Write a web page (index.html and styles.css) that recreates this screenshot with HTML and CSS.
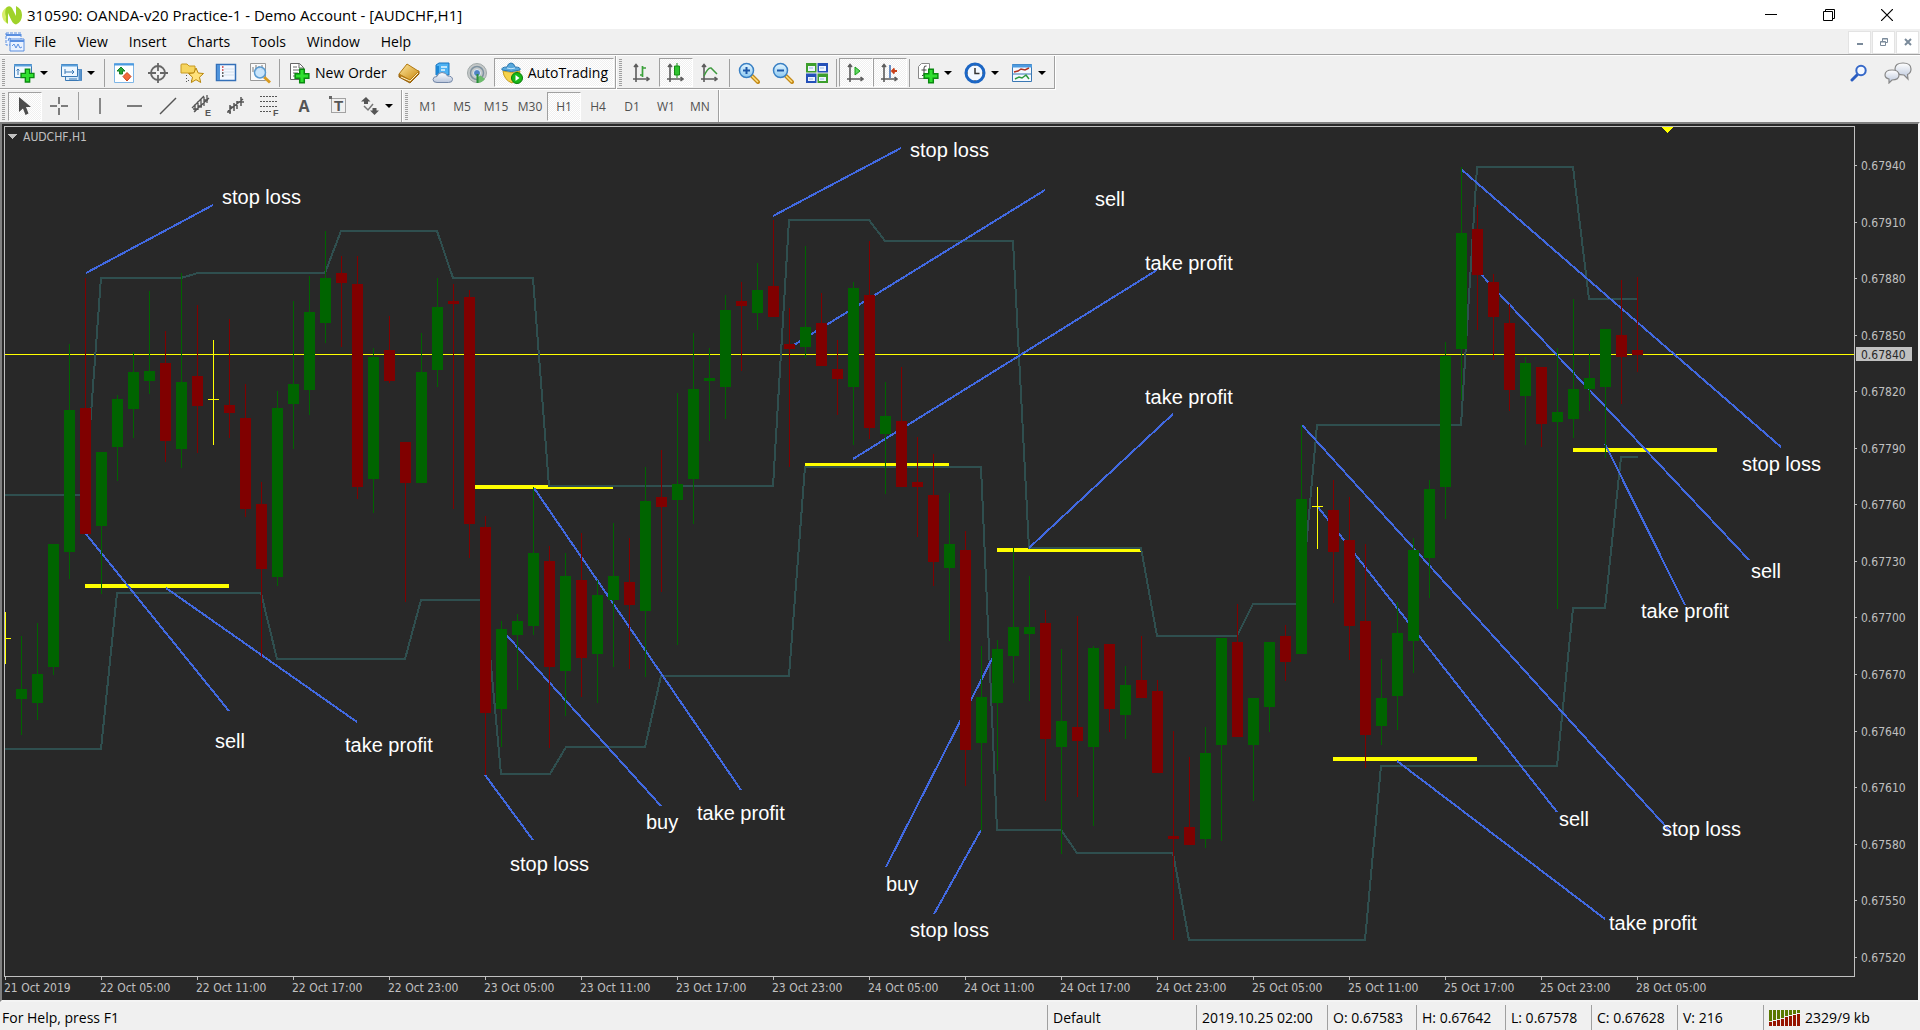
FILE: index.html
```html
<!DOCTYPE html>
<html lang="en">
<head>
<meta charset="utf-8">
<title>310590: OANDA-v20 Practice-1 - Demo Account - [AUDCHF,H1]</title>
<link rel="stylesheet" href="styles.css">
</head>
<body>
<svg class="defs" aria-hidden="true">
  <defs>
    <linearGradient id="gold" x1="0" y1="0" x2="1" y2="1"><stop offset="0" stop-color="#ffe9a0"/><stop offset="1" stop-color="#c8860c"/></linearGradient>
    <linearGradient id="sky" x1="0" y1="0" x2="0" y2="1"><stop offset="0" stop-color="#e4f6ff"/><stop offset="1" stop-color="#8cc8f0"/></linearGradient>
    <linearGradient id="cloud" x1="0" y1="0" x2="0" y2="1"><stop offset="0" stop-color="#fff"/><stop offset="1" stop-color="#b8c4da"/></linearGradient>
    <symbol id="plus" viewBox="0 0 14 14"><path d="M5 1h4v4h4v4H9v4H5V9H1V5h4z" fill="#2fe02f" stroke="#0a8a10" stroke-width="1.3"/></symbol>
    <symbol id="axes" viewBox="0 0 18 20"><path d="M4 19V2M1 16h16M2 4l2-2.5L6 4M14.500 14l2.500 2-2.500 2" fill="none" stroke="#5c5c5c" stroke-width="1.600"/></symbol>
  </defs>
</svg>

<header class="titlebar">
  <svg class="logo" viewBox="0 0 20 20" aria-hidden="true"><path d="M5 2Q0 5 0 10t5 8.500V5z" fill="#d9ee6e"/><path d="M5 2Q8 0 10 3l4 8V1q6 3 6 9 0 7-6 9.500-3-.5-5-5L6 8v11Q3 17 4 12 2 5 5 2z" fill="#9fd22a"/></svg>
  <h1 class="title">310590: OANDA-v20 Practice-1 - Demo Account - [AUDCHF,H1]</h1>
  <div class="window-buttons">
    <button class="wbtn" aria-label="Minimize"><svg width="12" height="12"><path d="M0 5.500h12" stroke="#000"/></svg></button>
    <button class="wbtn" aria-label="Restore"><svg width="12" height="12" fill="none" stroke="#000"><path d="M.5 2.500h9v9h-9zM2.500 2.500v-2h9v9h-2"/></svg></button>
    <button class="wbtn" aria-label="Close"><svg width="12" height="12" stroke="#000" stroke-width="1.200"><path d="M0 0l12 12M12 0L0 12"/></svg></button>
  </div>
</header>

<nav class="menubar">
  <svg class="doc-icon" viewBox="0 0 20 20" fill="#eaf2ff" stroke="#5b8fe0" aria-hidden="true"><path d="M1 1h15v12H1z" stroke-dasharray="3 1"/><path d="M1 3h15" stroke-width="2"/><path d="M5 7h14v12H5z"/><path d="M5 9h14" stroke-width="2"/><path d="M7 14l2-2 2 4 2-4 2 4 2-1M3 9l1-3 2 1" fill="none"/></svg>
  <button class="menu">File</button>
  <button class="menu">View</button>
  <button class="menu">Insert</button>
  <button class="menu">Charts</button>
  <button class="menu">Tools</button>
  <button class="menu">Window</button>
  <button class="menu">Help</button>
  <div class="mdi-buttons">
    <button class="mdi" aria-label="Minimize chart"><svg width="8" height="8"><path d="M1 6h6" stroke="#7a8a9a" stroke-width="2"/></svg></button>
    <button class="mdi" aria-label="Restore chart"><svg width="8" height="8" fill="none" stroke="#7a8a9a"><path d="M.5 3.500h5v4h-5zM.5 4h5M2.500 3V.5h5v4H6M2.500 1h5"/></svg></button>
    <button class="mdi" aria-label="Close chart"><svg width="8" height="8" stroke="#7a8a9a" stroke-width="2"><path d="M1 1l6 6M7 1L1 7"/></svg></button>
  </div>
</nav>

<div class="toolrow toolrow-main">
  <div class="toolbar">
    <span class="grip"></span>
    <button class="tool drop" aria-label="New chart"><svg width="22" height="22"><path d="M1.500 2.500h17v13h-17z" fill="#eef7ff" stroke="#3a78b4"/><path d="M1 3.500h18" stroke="#5aa0dc" stroke-width="2"/><path d="M5 7v6M3.500 8.500L5 7l1.500 1.500M9 12h5" stroke="#3a78b4" fill="none"/><use href="#plus" x="7" y="6" width="15" height="15"/></svg><i class="arrow"></i></button>
    <button class="tool drop" aria-label="Profiles"><svg width="22" height="22"><path d="M5.500 7.500h16v11h-16z" fill="#d8ebfb" stroke="#3a78b4"/><path d="M20 7v12" stroke="#5a94cc" stroke-width="3"/><path d="M1.500 2.500h16v12h-16z" fill="#eef7ff" stroke="#3a78b4"/><path d="M1 3.500h17" stroke="#5aa0dc" stroke-width="2"/><path d="M5 7v5M5 10h9M12 8l2 2-2 2M9 17h8" stroke="#3a78b4" fill="none"/></svg><i class="arrow"></i></button>
    <span class="sep"></span>
    <button class="tool" aria-label="Market Watch"><svg width="22" height="22"><path d="M1.500 1.500h19v19h-19z" fill="#fff" stroke="#7fb6e6"/><path d="M1 2.500h20" stroke="#4d9be0" stroke-width="2"/><path d="M8 5l4 4H9.500v3h-3V9H4z" fill="#2aa53a" stroke="#16802a"/><path d="M14 19l-4-4.500 4-4 4 4z" fill="#f26a3a" stroke="#c8401a"/></svg></button>
    <button class="tool" aria-label="Data Window"><svg width="22" height="22" fill="none" stroke="#666" stroke-width="1.800"><circle cx="11" cy="11" r="7"/><path d="M11 1v8M11 13v8M1 11h8M13 11h8"/></svg></button>
    <button class="tool" aria-label="Navigator"><svg width="24" height="22"><path d="M1 11V3q0-1 1-1h5l2 2h6v7z" fill="#f6d560" stroke="#c89a20"/><path d="M6.500 13v8M8 18.500h5" stroke="#555" stroke-dasharray="1 2"/><path d="M16 6l2.200 5 5.300.5-4 3.700 1.200 5.300-4.700-2.800-4.700 2.800 1.200-5.300-4-3.700 5.300-.5z" fill="#ffe27a" stroke="#b8860b"/></svg></button>
    <button class="tool" aria-label="Terminal"><svg width="22" height="22"><path d="M1.500 2.500h19v16h-19z" fill="#f4f8ff" stroke="#3470b8" stroke-width="1.500"/><path d="M2 3h3v15H2z" fill="#4f94dc"/><path d="M9 7h10M9 10h10M9 13h10" stroke="#d4e0ec"/><path d="M7 5h1.500M7 8h1.500" stroke="#d03030" stroke-width="1.500"/><path d="M7 11h1.500M7 14h1.500" stroke="#333" stroke-width="1.500"/></svg></button>
    <button class="tool" aria-label="Strategy Tester"><svg width="22" height="22"><path d="M1.500 1.500h15v17h-15z" fill="#fafafa" stroke="#999"/><path d="M4 5v5M7 3v6M13 3v5M10 4v3" stroke="#777"/><path d="M15 15l6 5.500" stroke="#d89a20" stroke-width="3"/><circle cx="11" cy="10.500" r="5.500" fill="#bfe0fa" fill-opacity=".85" stroke="#5a9ad0" stroke-width="1.500"/></svg></button>
    <span class="sep"></span>
    <button class="tool wide"><svg width="22" height="22"><path d="M2.500 1.500h9l4 4v12h-13z" fill="#fff" stroke="#666"/><path d="M11 1.500V6h4.500M5 5h4M5 8h8M5 11h5M5 14h4" fill="none" stroke="#666"/><use href="#plus" x="6" y="6" width="16" height="16"/></svg>New Order</button>
    <button class="tool" aria-label="MetaEditor"><svg width="22" height="22"><path d="M1 12v3l11 6 9-9v-3z" fill="#b87814" stroke="#94600c"/><path d="M1 12L9 2l12 7.500-9 8.500z" fill="url(#gold)" stroke="#b07810"/><path d="M3 15l9 4 8-8" stroke="#fff4c8" fill="none"/></svg></button>
    <button class="tool" aria-label="Market"><svg width="22" height="22"><path d="M4 3l3-2h10v12H4z" fill="#4db1f2" stroke="#1874c0"/><path d="M4 4h3V13H4z" fill="#1b86d6"/><path d="M9 5h6M9 8h4" stroke="#e4f6ff" stroke-width="1.500"/><path d="M5 20.500q-4 0-4-3t4-3q1-4 5-4t5.500 3.500q5 0 5 3.500 0 3-4 3z" fill="url(#cloud)" stroke="#7488a8"/></svg></button>
    <button class="tool" aria-label="Signals"><svg width="22" height="22"><circle cx="11" cy="11" r="9.500" fill="#c4c8c8" stroke="#a0a8a8"/><g fill="none" stroke="#7e92a0" stroke-width="1.500"><circle cx="11" cy="11" r="6.500"/></g><path d="M11 11v10q5 0 8-4z" fill="#6cbc6c"/><circle cx="11" cy="11" r="3.500" fill="#4f83c4" stroke="#e4ecf4"/><path d="M11.500 12v9" stroke="#2b8f3a" stroke-width="2"/></svg></button>
    <button class="tool wide pressed" aria-pressed="true"><svg width="22" height="22"><path d="M2 9q9 3 17 0-1 8-8 12Q3 18 2 9z" fill="#f6d34c" stroke="#c49a1a"/><path d="M1 8q-1-3 5-3 1-4 4-4t4 4q6 0 5 3-8 3-18 0z" fill="#58a8dc" stroke="#2c78b0"/><path d="M6 6q4 1.500 8 0" stroke="#c6e6fa" fill="none"/><circle cx="16" cy="16" r="5.500" fill="#18b818" stroke="#0a7a0a"/><path d="M14.500 13l4 3-4 3z" fill="#fff"/></svg>AutoTrading</button>
  </div>
  <div class="toolbar">
    <span class="grip"></span>
    <button class="tool" aria-label="Bar Chart"><svg width="20" height="22"><use href="#axes" y="1" width="18" height="20"/><path d="M10.500 4v11M8 13h2.500M10.500 6H14" fill="none" stroke="#3aa03a" stroke-width="1.700"/></svg></button>
    <button class="tool pressed" aria-label="Candlesticks" aria-pressed="true"><svg width="20" height="22"><use href="#axes" y="1" width="18" height="20"/><path d="M11 1v15" stroke="#178a17"/><path d="M8.500 4h5v9h-5z" fill="#2fc42f" stroke="#178a17"/></svg></button>
    <button class="tool" aria-label="Line Chart"><svg width="20" height="22"><use href="#axes" y="1" width="18" height="20"/><path d="M4 14q4-9 7-8 3 3 6 6" fill="none" stroke="#3f9a3f" stroke-width="1.500"/></svg></button>
    <span class="sep"></span>
    <button class="tool" aria-label="Zoom In"><svg width="22" height="22"><path d="M13 13l7 7" stroke="#c48a18" stroke-width="4" stroke-linecap="round"/><path d="M14 14l6 6" stroke="#ffe080" stroke-width="1.500"/><circle cx="8.500" cy="8.500" r="7" fill="url(#sky)" stroke="#3a80c4" stroke-width="1.500"/><path d="M8.500 5v7M5 8.500h7" stroke="#1c58a8" stroke-width="2"/></svg></button>
    <button class="tool" aria-label="Zoom Out"><svg width="22" height="22"><path d="M13 13l7 7" stroke="#c48a18" stroke-width="4" stroke-linecap="round"/><path d="M14 14l6 6" stroke="#ffe080" stroke-width="1.500"/><circle cx="8.500" cy="8.500" r="7" fill="url(#sky)" stroke="#3a80c4" stroke-width="1.500"/><path d="M5 8.500h7" stroke="#1c58a8" stroke-width="2"/></svg></button>
    <button class="tool" aria-label="Tile Windows"><svg width="22" height="22"><path d="M0 1h10.500v9.500H0zM11.500 11.500H22V21H11.500z" fill="#3c9e2c"/><path d="M11.500 1H22v9.500H11.500zM0 11.500h10.500V21H0z" fill="#2450b8"/><path d="M2 4h7v5H2zM13 4h7v5h-7zM2 15h7v4H2zM13 15h7v4h-7z" fill="#eef4ff"/><path d="M3 6h4M14 6h4M3 17h4M14 17h4" stroke="#9ab8e0"/></svg></button>
    <span class="sep"></span>
    <button class="tool pressed" aria-label="Auto Scroll" aria-pressed="true"><svg width="20" height="22"><use href="#axes" y="1" width="18" height="20"/><path d="M9 5l5 4-5 4z" fill="#5fdc5f" stroke="#1c9a1c"/></svg></button>
    <button class="tool pressed" aria-label="Chart Shift" aria-pressed="true"><svg width="20" height="22"><use href="#axes" y="1" width="18" height="20"/><path d="M10 3v13" stroke="#3a6ab0" stroke-width="1.500"/><path d="M12 9h5M14.500 6.500L12 9l2.500 2.500" fill="none" stroke="#c8401a" stroke-width="1.800"/></svg></button>
    <span class="sep"></span>
    <button class="tool drop" aria-label="Indicators"><svg width="22" height="22"><path d="M1.500 4.500l3-3h8v15h-11z" fill="#fff" stroke="#888"/><path d="M9.500 4Q7 3.500 7 6v6q0 2-2 1.500M4.500 8h5" fill="none" stroke="#444"/><use href="#plus" x="6" y="6" width="16" height="16"/></svg><i class="arrow"></i></button>
    <button class="tool drop" aria-label="Periods"><svg width="22" height="22"><circle cx="11" cy="11" r="9" fill="#f2f8ff" stroke="#1c66c4" stroke-width="3"/><path d="M11 6v5.500h4.500" fill="none" stroke="#333" stroke-width="1.500"/><path d="M11 3v1M11 18v1M3 11h1M18 11h1" stroke="#555"/></svg><i class="arrow"></i></button>
    <button class="tool drop" aria-label="Templates"><svg width="22" height="22"><path d="M1.500 2.500h19v17h-19z" fill="#f4f9ff" stroke="#3a78b4"/><path d="M1 4h20" stroke="#4d9be0" stroke-width="3"/><path d="M1 12h20" stroke="#3a78b4"/><path d="M3 10l4-1 3-2 4 1 4-2" fill="none" stroke="#b03020" stroke-width="1.500"/><path d="M4 17l4-2 3 1 4-3 3 4" fill="none" stroke="#2c9a3c" stroke-width="1.500"/></svg><i class="arrow"></i></button>
  </div>
  <div class="toolrow-end">
    <button class="plain" aria-label="Search"><svg width="18" height="18"><path d="M2 16l5-5" stroke="#2a5cc0" stroke-width="3" stroke-linecap="round"/><circle cx="11" cy="6.500" r="4.700" fill="#f4f8ff" stroke="#3568c8" stroke-width="2"/></svg></button>
    <button class="plain" aria-label="Messages"><svg width="28" height="22" fill="url(#cloud)" stroke="#888" stroke-width="1.200"><path d="M19 1q8 0 8 6 0 4-3.500 5.500L24 17l-4-4q-9 0-9-6t8-6z"/><path d="M8 8q7 0 7 5t-7 5l-3 3V17q-4-1-4-4 0-5 7-5z"/></svg></button>
  </div>
</div>

<div class="toolrow toolrow-draw">
  <div class="toolbar">
    <span class="grip"></span>
    <button class="tool pressed" aria-label="Cursor" aria-pressed="true"><svg width="20" height="22"><path d="M4 2v15l4-3.500L10.500 20l3-1.500L11 12h5z" fill="#4c4c4c"/></svg></button>
    <button class="tool" aria-label="Crosshair"><svg width="20" height="20"><path d="M10 1v7M10 12v7M1 10h7M12 10h7" stroke="#555" stroke-width="1.500"/></svg></button>
    <span class="sep"></span>
    <button class="tool" aria-label="Vertical Line"><svg width="20" height="20"><path d="M10 2v16" stroke="#666" stroke-width="1.500"/></svg></button>
    <button class="tool" aria-label="Horizontal Line"><svg width="20" height="20"><path d="M3 10h15" stroke="#555" stroke-width="1.500"/></svg></button>
    <button class="tool" aria-label="Trendline"><svg width="20" height="20"><path d="M2 18L18 2" stroke="#555" stroke-width="1.500"/></svg></button>
    <button class="tool" aria-label="Equidistant Channel"><svg width="24" height="26"><path d="M2 15L14 3M4 19L19 5M5 11v8M8 8v9M11 6v9M14 4v9M17 2v8M3 16h4M8 13h4M14 7h4" stroke="#555" stroke-width="1.300"/><text x="15" y="23" class="glyph-small">E</text></svg></button>
    <button class="tool" aria-label="Andrews Pitchfork"><svg width="22" height="22"><path d="M3 16L18 4M5 10v9M9 8v8M12 6v8M16 2v9M2 17h4M5 12h4M12 7h7" stroke="#555" stroke-width="1.500"/></svg></button>
    <button class="tool" aria-label="Fibonacci Retracement"><svg width="22" height="26"><path d="M1 3.500h18M1 8.500h18M1 13.500h18M1 18.500h12" stroke="#555" stroke-dasharray="2 1"/><text x="14" y="23" class="glyph-small">F</text></svg></button>
    <button class="tool glyph" aria-label="Text">A</button>
    <button class="tool" aria-label="Text Label"><svg width="20" height="22"><path d="M3.500 3.500h14v14h-14z" fill="none" stroke="#555" stroke-dasharray="1 1"/><path d="M1 1h3v3H1z" fill="#666"/><text x="6" y="16" class="glyph-label">T</text></svg></button>
    <button class="tool drop" aria-label="Arrows"><svg width="20" height="20"><path d="M6 1l4.500 4.500H8V8H4V5.500H1z" fill="#555"/><path d="M14.500 19L10 14.500h2.500V12h4v2.500H19z" fill="#555"/><path d="M4 10l4 4 5-6" fill="none" stroke="#777" stroke-width="1.500"/></svg><i class="arrow"></i></button>
  </div>
  <div class="toolbar periods">
    <span class="grip"></span>
    <button class="tool">M1</button>
    <button class="tool">M5</button>
    <button class="tool">M15</button>
    <button class="tool">M30</button>
    <button class="tool pressed" aria-pressed="true">H1</button>
    <button class="tool">H4</button>
    <button class="tool">D1</button>
    <button class="tool">W1</button>
    <button class="tool">MN</button>
  </div>
</div>

<main class="chart-window">
  <svg class="chart" viewBox="2 124 1916 876" preserveAspectRatio="xMinYMin meet" role="img" aria-label="AUDCHF hourly candlestick chart">
    <g class="levels">
      <path d="M85 586h144M475 487h138M805 465h144M997 550h144M1333 759h144M1573 450h144"/>
    </g>
    <path class="price-line" d="M5 354.500h1849"/>
    <path class="channel" d="M5 495H85L101 278H181L198 273H325L341 231H437L453 278H533L549 486H773L789 220H869L885 241H1013L1029 548H1141L1157 636H1237L1253 604H1301L1317 425H1461L1477 167H1573L1589 299H1637"/>
    <path class="channel" d="M5 749H101L117 593H261L277 659H405L421 600H485L501 774H550L566 747H645L661 676H789L805 467H981L997 830H1061L1077 853H1173L1189 940H1365L1381 766H1557L1573 608H1605L1621 457H1638"/>
    <path class="pointers" d="M86 273L213 205M86 534L229 711M166 588L357 722M485 775L533 840M501 629L661 806M534 488L741 790M773 216L901 148M789 348L1045 190M853 459L1157 270M1029 548L1173 414M886 867L997 649M934 914L981 830M1302 425L1669 830M1318 507L1557 812M1397 761L1605 919M1462 170L1781 447M1477 270L1749 560M1605 444L1685 605"/>
    <g id="candles"></g>
    <path class="frame" d="M4.500 976.500V126.500H1854.500V976.500z"/>
    <g id="price-axis" class="axis"></g>
    <g id="time-axis" class="axis"></g>
    <path class="price-tag" d="M1856 347h56v14h-56z"/>
    <text class="price-tag-text" x="1861" y="359">0.67840</text>
    <path class="marker" d="M1662 127h11l-5.500 6z"/>
    <path class="collapse" d="M8 134h9l-4.500 5z"/>
    <text class="symbol" x="23" y="141">AUDCHF,H1</text>
    <g class="notes">
      <text x="222" y="204">stop loss</text>
      <text x="215" y="748">sell</text>
      <text x="345" y="752">take profit</text>
      <text x="510" y="871">stop loss</text>
      <text x="646" y="829">buy</text>
      <text x="697" y="820">take profit</text>
      <text x="910" y="157">stop loss</text>
      <text x="1095" y="206">sell</text>
      <text x="1145" y="270">take profit</text>
      <text x="1145" y="404">take profit</text>
      <text x="886" y="891">buy</text>
      <text x="910" y="937">stop loss</text>
      <text x="1742" y="471">stop loss</text>
      <text x="1751" y="578">sell</text>
      <text x="1641" y="618">take profit</text>
      <text x="1559" y="826">sell</text>
      <text x="1662" y="836">stop loss</text>
      <text x="1609" y="930">take profit</text>
    </g>
  </svg>
</main>

<footer class="statusbar">
  <span class="cell help">For Help, press F1</span>
  <span class="cell profile">Default</span>
  <span class="cell date">2019.10.25 02:00</span>
  <span class="cell ohlc">O: 0.67583</span>
  <span class="cell ohlc">H: 0.67642</span>
  <span class="cell low">L: 0.67578</span>
  <span class="cell low">C: 0.67628</span>
  <span class="cell low">V: 216</span>
  <span class="cell traffic"><svg width="31" height="16" aria-hidden="true"><path d="M0 0h3v11H0zM4 0h3v10H4zM8 0h3v9H8zM12 0h3v8h-3zM16 0h3v6h-3zM20 0h3v5h-3zM24 0h3v4h-3zM28 0h3v3h-3z" fill="#5a7800"/><path d="M0 12h3v4H0zM4 11h3v5H4zM8 10h3v6H8zM12 9h3v7h-3zM16 7h3v9h-3zM20 6h3v10h-3zM24 5h3v11h-3zM28 4h3v12h-3z" fill="#961400"/></svg>2329/9 kb</span>
</footer>
<script src="chart.js"></script>
</body>
</html>
```

FILE: styles.css
```css
* { box-sizing: border-box; }

body {
  margin: 0;
  height: 100vh;
  display: flex;
  flex-direction: column;
  background: #f0f0f0;
  color: #000;
  font: 14px/20px "Open Sans", "Noto Sans", sans-serif;
  overflow: hidden;
}

button {
  font: inherit;
  color: inherit;
  background: none;
  border: 0;
  padding: 0;
  margin: 0;
}

svg { display: block; flex: none; }
.defs { position: absolute; width: 0; height: 0; }

/* Title bar */
.titlebar {
  display: flex;
  align-items: center;
  height: 29px;
  padding-left: 2px;
  background: #fff;
}
.logo { width: 20px; height: 20px; }
.title { margin: 0 0 0 5px; font-size: 15px; font-weight: 400; white-space: nowrap; }
.window-buttons { display: flex; margin-left: auto; padding-right: 4px; }
.wbtn { width: 58px; height: 28px; display: grid; place-items: center; }

/* Menu */
.menubar {
  display: flex;
  align-items: center;
  height: 27px;
  padding-left: 5px;
  border-bottom: 1px solid #fff;
  box-shadow: inset 0 -1px #a0a0a0;
}
.doc-icon { width: 20px; height: 20px; margin-right: -2px; }
.menu { padding: 0 10px 0 11px; }
.mdi-buttons { display: flex; gap: 1px; margin-left: auto; padding-right: 1px; }
.mdi {
  width: 23px;
  height: 23px;
  display: grid;
  place-items: center;
  background: #fff;
  border: 1px solid #e3e3e3;
}

/* Toolbars */
.toolrow { display: flex; height: 32px; }
.toolrow-main { height: 34px; }
.toolrow-main .toolbar { border-bottom: 1px solid #fff; box-shadow: inset -1px -1px #a0a0a0; }
.toolbar {
  display: flex;
  align-items: center;
  padding: 0 2px;
  border-right: 1px solid #fff;
  box-shadow: inset -1px 0 #a0a0a0;
}
.grip {
  width: 3px;
  height: 27px;
  margin-right: 3px;
  background: repeating-linear-gradient(#a0a0a0 0 1px, #f0f0f0 1px 2px);
}
.tool {
  width: 34px;
  height: 29px;
  display: flex;
  align-items: center;
  justify-content: center;
}
.drop { width: 47px; justify-content: flex-start; gap: 5px; padding-left: 5px; }
.wide { width: auto; gap: 5px; padding: 0 5px 0 6px; }
.pressed {
  background: repeating-conic-gradient(#fff 0 25%, #f0f0f0 0 50%) 0 0 / 2px 2px;
  border: 1px solid #a0a0a0;
  border-right-color: #fff;
  border-bottom-color: #fff;
}
.arrow {
  border: 4px solid transparent;
  border-top-color: #000;
  border-bottom: 0;
}
.sep { width: 1px; height: 28px; margin: 0 2px; background: #a0a0a0; }
.toolrow-end { display: flex; align-items: center; gap: 16px; margin-left: auto; padding-right: 8px; }
.toolrow-draw .sep { margin-right: 4px; }
.toolrow-draw .drop { width: 45px; }
.glyph { color: #555; font: bold 16px/20px "Open Sans", sans-serif; }
.glyph-small { fill: #555; font: bold 9px "Liberation Sans", sans-serif; }
.glyph-label { fill: #555; font: bold 15px "Liberation Sans", sans-serif; }
.periods { color: #505050; font-size: 12px; }
.periods .tool { padding-top: 2px; }

/* Chart */
.chart-window {
  flex: 1;
  min-height: 0;
  background: #282828;
  border: 2px solid;
  border-color: #808080 #f4f4f4 #f4f4f4 #808080;
}
.chart { width: 100%; height: 100%; shape-rendering: crispEdges; }
.levels { stroke: #ff0; stroke-width: 4; }
.price-line { stroke: #ff0; }
.channel { fill: none; stroke: #2f4f4f; stroke-width: 2; }
.pointers { fill: none; stroke: #4169e1; stroke-width: 2; }
.frame { fill: none; stroke: #c0c0c0; }
.up { fill: #006400; }
.down { fill: #800000; }
.doji, .marker { fill: #ff0; }
.axis rect, .price-tag, .collapse { fill: #c0c0c0; }
.axis text, .symbol, .price-tag-text {
  fill: #c0c0c0;
  font: 12px "DejaVu Sans Condensed", "Noto Sans", sans-serif;
}
.price-tag-text { fill: #282828; }
.notes { fill: #fff; font: 20px "Liberation Sans", sans-serif; }

/* Status bar */
.statusbar { display: flex; height: 28px; padding: 3px 0 0; }
.cell {
  display: flex;
  align-items: center;
  height: 25px;
  padding-left: 5px;
  border-left: 1px solid #a0a0a0;
  white-space: nowrap;
}
.help { flex: 1; padding-left: 2px; border-left: 0; }
.profile { width: 149px; }
.date { width: 131px; }
.ohlc { width: 89px; }
.low { width: 86px; }
.traffic { width: 157px; gap: 5px; }
```

FILE: chart.js
```js
// One entry per hour: [kind, high, body top, body bottom, low], u = up, d = down, n = unchanged
const candles = [
  ["n",612,638,639,664],["u",636,689,699,735],["u",623,674,703,720],["u",544,544,667,675],
  ["u",344,410,552,579],["d",278,408,534,534],["u",452,452,526,594],["u",395,399,447,481],
  ["u",352,372,409,438],["u",291,371,381,394],["d",331,363,441,462],["u",273,382,449,468],
  ["d",305,376,406,453],["n",340,399,400,445],["d",319,405,413,438],["d",384,418,509,517],
  ["d",482,504,569,658],["u",391,408,577,586],["u",301,384,404,449],["u",276,312,390,415],
  ["u",231,278,323,343],["d",256,273,283,347],["d",256,284,487,499],["u",348,357,479,513],
  ["d",316,350,381,383],["d",442,442,483,602],["u",333,372,483,483],["u",278,307,370,387],
  ["d",284,301,304,509],["d",290,297,524,558],["d",516,527,713,775],["u",621,629,709,747],
  ["u",614,621,635,690],["u",487,553,626,635],["d",546,561,667,748],["u",553,576,671,716],
  ["d",533,580,658,697],["u",580,595,654,703],["u",523,576,600,667],["d",538,582,605,669],
  ["u",467,501,611,677],["d",450,497,507,592],["u",393,484,500,645],["u",333,389,479,524],
  ["u",348,378,381,441],["u",295,310,387,419],["d",282,301,306,371],["u",263,290,313,330],
  ["d",220,286,317,317],["d",308,344,349,467],["u",246,327,347,358],["d",293,323,366,366],
  ["d",340,369,379,415],["u",282,288,387,445],["d",241,295,428,439],["u",382,416,434,494],
  ["d",367,421,487,487],["d",437,482,487,537],["d",454,495,562,586],["u",493,544,568,641],
  ["d",531,550,750,786],["u",646,697,743,831],["u",640,649,703,771],["u",548,627,656,683],
  ["u",576,627,634,701],["d",610,623,739,801],["u",649,721,747,854],["d",616,727,741,797],
  ["u",646,648,747,826],["d",644,644,709,732],["u",666,685,715,739],["d",636,680,698,698],
  ["d",680,691,773,773],["d",731,836,839,940],["d",757,827,845,845],["u",727,753,839,848],
  ["u",638,638,745,841],["d",604,642,737,737],["u",698,698,745,801],["u",642,642,707,732],
  ["d",625,636,662,681],["u",425,499,654,654],["n",487,506,507,549],["d",480,510,552,603],
  ["d",497,540,626,660],["d",544,621,735,768],["u",659,698,726,745],["u",602,633,696,730],
  ["u",538,550,641,673],["u",480,489,558,598],["u",342,356,487,519],["u",167,233,349,400],
  ["d",205,229,275,330],["d",274,282,317,360],["d",304,323,390,411],["u",357,363,396,445],
  ["d",367,367,424,447],["u",348,412,422,609],["u",299,389,419,438],["u",354,378,389,411],
  ["u",329,329,387,458],["d",280,335,357,404],["d",277,350,355,372]
];
const classes = { u: "up", d: "down", n: "doji" };
const times = [
  "21 Oct 2019", "22 Oct 05:00", "22 Oct 11:00", "22 Oct 17:00", "22 Oct 23:00",
  "23 Oct 05:00", "23 Oct 11:00", "23 Oct 17:00", "23 Oct 23:00",
  "24 Oct 05:00", "24 Oct 11:00", "24 Oct 17:00", "24 Oct 23:00",
  "25 Oct 05:00", "25 Oct 11:00", "25 Oct 17:00", "25 Oct 23:00", "28 Oct 05:00"
];

function add(parent, tag, attrs, text) {
  const el = document.createElementNS("http://www.w3.org/2000/svg", tag);
  for (const name in attrs) el.setAttribute(name, attrs[name]);
  if (text) el.textContent = text;
  parent.appendChild(el);
}

const plot = document.getElementById("candles");
candles.forEach(([kind, high, top, bottom, low], i) => {
  const x = 5 + 16 * i;
  const left = Math.max(5, x - 5);
  add(plot, "rect", { class: classes[kind], x, y: high, width: 1, height: low - high });
  add(plot, "rect", { class: classes[kind], x: left, y: top, width: x + 6 - left, height: bottom - top });
});

const priceAxis = document.getElementById("price-axis");
for (let i = 0; i < 15; i++) {
  const y = Math.round(165 + 56.55 * i);
  add(priceAxis, "rect", { x: 1855, y, width: 2, height: 1 });
  add(priceAxis, "text", { x: 1861, y: y + 5 }, (0.6794 - 0.0003 * i).toFixed(5));
}

const timeAxis = document.getElementById("time-axis");
times.forEach((label, i) => {
  const x = 5 + 96 * i;
  add(timeAxis, "rect", { x, y: 977, width: 1, height: 3 });
  add(timeAxis, "text", { x: x - 1, y: 992 }, label);
});
```
